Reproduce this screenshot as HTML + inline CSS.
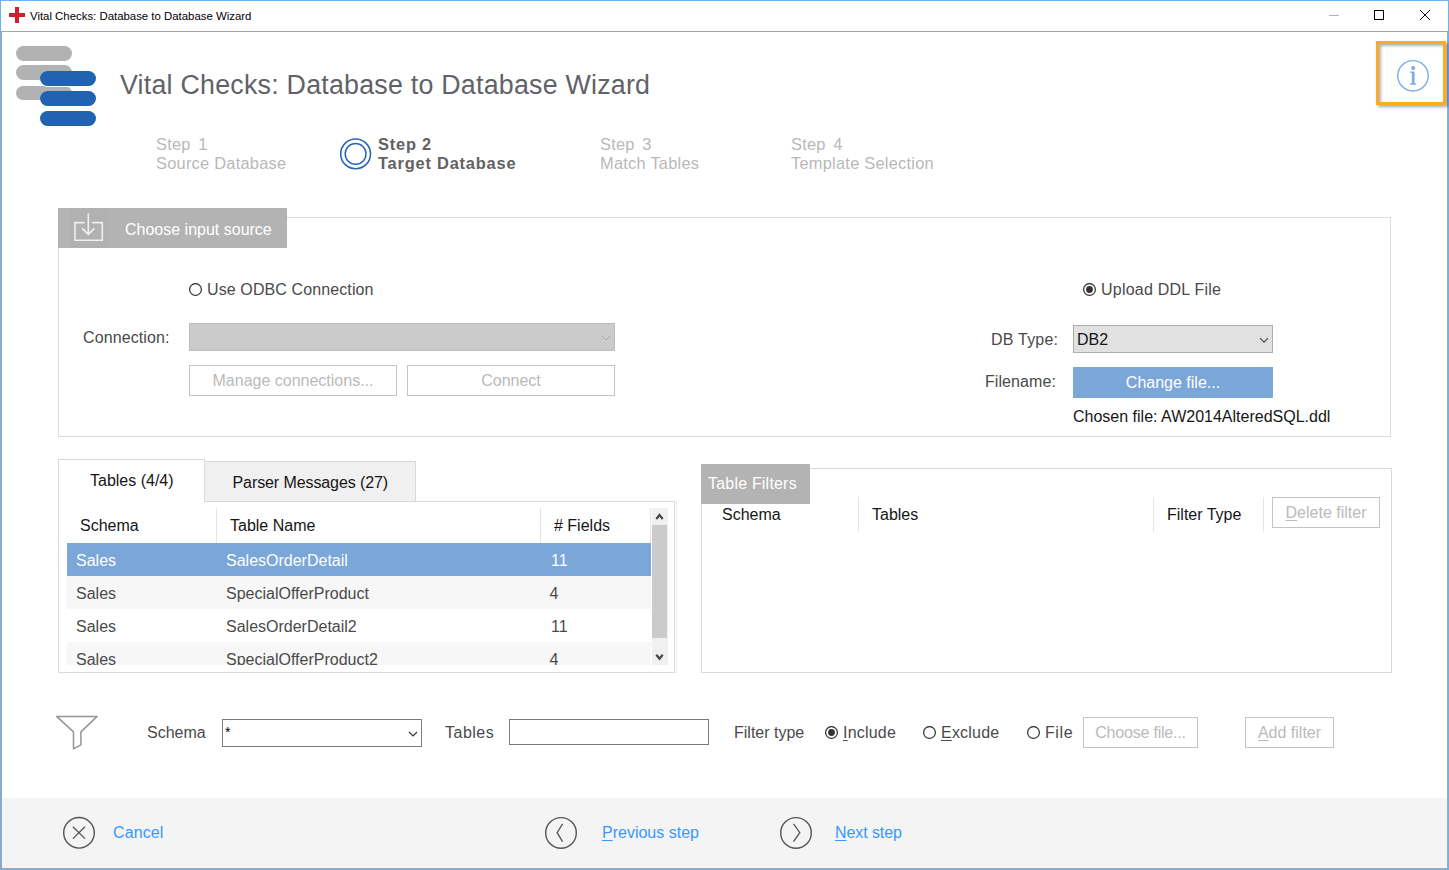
<!DOCTYPE html>
<html><head><meta charset="utf-8">
<style>
*{margin:0;padding:0;box-sizing:border-box}
html,body{width:1449px;height:870px;overflow:hidden;background:#fff;font-family:"Liberation Sans",sans-serif;font-size:16px;color:#333}
.a{position:absolute;white-space:nowrap}
#win{position:absolute;left:0;top:0;width:1449px;height:870px;border:1px solid #6cb2f0;background:#fff}
#inner{position:absolute;left:1px;top:31px;width:1447px;height:838px;border:1px solid #a8a8a8;border-top:1px solid #a5a5a5}
.t{position:absolute;white-space:nowrap;line-height:1}
u{text-underline-offset:1.5px}
</style></head><body>
<div id="win"></div>
<div id="inner"></div>
<!-- title bar -->
<div class="a" style="left:9px;top:13px;width:16px;height:4px;background:#d0202a"></div>
<div class="a" style="left:15px;top:7px;width:4px;height:16px;background:#d0202a"></div>
<div class="t" style="left:30px;top:10.7px;font-size:11.4px;color:#000">Vital Checks: Database to Database Wizard</div>
<div class="a" style="left:1329px;top:15px;width:10px;height:1px;background:#b0b0b0"></div>
<div class="a" style="left:1374px;top:10px;width:10px;height:10px;border:1px solid #000"></div>
<svg class="a" style="left:1419px;top:9px" width="12" height="12" viewBox="0 0 12 12"><path d="M1 1L11 11M11 1L1 11" stroke="#000" stroke-width="0.95"/></svg>

<!-- logo -->
<div class="a" style="left:16px;top:46px;width:56px;height:15px;border-radius:7.5px;background:#b1b2b1"></div>
<div class="a" style="left:16px;top:65.4px;width:56px;height:14.8px;border-radius:7.5px;background:#b1b2b1"></div>
<div class="a" style="left:16px;top:85.6px;width:56px;height:14.8px;border-radius:7.5px;background:#b1b2b1"></div>
<div class="a" style="left:39.5px;top:70.5px;width:57px;height:16px;border-radius:8px;background:#fff"></div>
<div class="a" style="left:39.5px;top:90.5px;width:57px;height:16px;border-radius:8px;background:#fff"></div>
<div class="a" style="left:40px;top:71px;width:56px;height:15px;border-radius:7.5px;background:#2163b0"></div>
<div class="a" style="left:40px;top:91px;width:56px;height:15px;border-radius:7.5px;background:#2163b0"></div>
<div class="a" style="left:40px;top:111px;width:56px;height:15px;border-radius:7.5px;background:#2163b0"></div>

<div class="t" style="left:120px;top:72px;font-size:26.8px;letter-spacing:0.23px;color:#5f6268">Vital Checks: Database to Database Wizard</div>

<!-- info -->
<div class="a" style="left:1376px;top:41px;width:70px;height:64px;border:3px solid #fcab26;box-shadow:2px 2px 3px rgba(0,0,0,.35), inset 2px 2px 3px rgba(0,0,0,.3)"></div>
<svg class="a" style="left:1395px;top:58px" width="36" height="36" viewBox="0 0 36 36"><circle cx="18" cy="17.85" r="15.2" fill="none" stroke="#7aaee0" stroke-width="1.4"/><circle cx="18.1" cy="10.1" r="2" fill="#7aaee0"/><path d="M15.4 13.6H19.5V25.3H21V26.8H15.2V25.3H16.9V15H15.4Z" fill="#7aaee0"/></svg>

<!-- steps -->
<div class="t" style="left:156px;top:135px;font-size:16.4px;letter-spacing:0.25px;color:#b8b8b8;line-height:19px">Step <span style="margin-left:2.7px">1</span><br>Source Database</div>
<svg class="a" style="left:338px;top:137px" width="34" height="34" viewBox="0 0 34 34"><circle cx="17.6" cy="16.9" r="14.9" fill="none" stroke="#2a66b5" stroke-width="1.6"/><circle cx="17.6" cy="16.9" r="10.4" fill="none" stroke="#2a66b5" stroke-width="1.5"/></svg>
<div class="t" style="left:378px;top:135px;font-size:16.4px;font-weight:bold;color:#626262;line-height:19px;letter-spacing:0.8px">Step 2<br>Target Database</div>
<div class="t" style="left:600px;top:135px;font-size:16.4px;letter-spacing:0.25px;color:#b8b8b8;line-height:19px">Step <span style="margin-left:2.7px">3</span><br>Match Tables</div>
<div class="t" style="left:791px;top:135px;font-size:16.4px;letter-spacing:0.25px;color:#b8b8b8;line-height:19px">Step <span style="margin-left:2.7px">4</span><br>Template Selection</div>

<!-- input source panel -->
<div class="a" style="left:58px;top:217px;width:1333px;height:220px;border:1px solid #dcdcdc"></div>
<div class="a" style="left:58px;top:208px;width:229px;height:40px;background:#b3b3b3"></div>
<div class="a" style="left:70px;top:208px;width:37px;height:40px;background:#b0b1b0"></div><svg class="a" style="left:72px;top:212px" width="34" height="32" viewBox="0 0 34 32"><path d="M12.6 10.6H3V28.3H30.3V10.6H20.1" fill="none" stroke="#f0f0f0" stroke-width="1.6"/><path d="M16.35 1.3V22.2M10.1 16.4l6.25 6 6.05-6" fill="none" stroke="#f0f0f0" stroke-width="1.6"/></svg>
<div class="t" style="left:125px;top:222px;font-size:16px;color:#fff">Choose input source</div>

<svg class="a" style="left:189px;top:283px" width="14" height="14" viewBox="0 0 14 14"><circle cx="6.5" cy="6.5" r="5.9" fill="#fff" stroke="#353535" stroke-width="1.25"/></svg>
<div class="t" style="letter-spacing:0.11px;left:207px;top:282px;font-size:16px;color:#4a4a4a">Use ODBC Connection</div>
<div class="t" style="letter-spacing:0.1px;left:83px;top:330px;font-size:16px;color:#4a4a4a">Connection:</div>
<div class="a" style="left:189px;top:323px;width:426px;height:28px;background:#cbcbcb;border:1px solid #bdbdbd"></div>
<svg class="a" style="left:601px;top:335px" width="10" height="6" viewBox="0 0 10 6"><path d="M1 1l4 4 4-4" fill="none" stroke="#a8a8a8" stroke-width="1"/></svg>
<div class="a" style="left:189px;top:365px;width:208px;height:31px;border:1px solid #c4c4c4"></div>
<div class="t" style="left:189px;top:373px;width:208px;text-align:center;font-size:16px;color:#bababa">Manage connections...</div>
<div class="a" style="left:407px;top:365px;width:208px;height:31px;border:1px solid #c4c4c4"></div>
<div class="t" style="left:407px;top:373px;width:208px;text-align:center;font-size:16px;color:#bababa">Connect</div>

<svg class="a" style="left:1083px;top:283px" width="14" height="14" viewBox="0 0 14 14"><circle cx="6.5" cy="6.5" r="5.9" fill="#fff" stroke="#353535" stroke-width="1.25"/><circle cx="6.5" cy="6.5" r="3.4" fill="#333"/></svg>
<div class="t" style="letter-spacing:0.23px;left:1101px;top:282px;font-size:16px;color:#4a4a4a">Upload DDL File</div>
<div class="t" style="letter-spacing:0.22px;left:991px;top:332px;font-size:16px;color:#4a4a4a">DB Type:</div>
<div class="a" style="left:1073px;top:325px;width:200px;height:28px;background:#e1e1e1;border:1px solid #adadad"></div>
<div class="t" style="left:1077px;top:332px;font-size:16px;color:#161616">DB2</div>
<svg class="a" style="left:1259px;top:336.5px" width="10" height="7" viewBox="0 0 10 7"><path d="M1 1.2l4 4 4-4" fill="none" stroke="#444" stroke-width="1.1"/></svg>
<div class="t" style="letter-spacing:0.08px;left:985px;top:374px;font-size:16px;color:#4a4a4a">Filename:</div>
<div class="a" style="left:1073px;top:367px;width:200px;height:31px;background:#7aa6d8"></div>
<div class="t" style="left:1073px;top:375px;width:200px;text-align:center;font-size:16px;color:#fff">Change file...</div>
<div class="t" style="left:1073px;top:409px;font-size:16px;color:#161616">Chosen file: AW2014AlteredSQL.ddl</div>

<!-- tables panel -->
<div class="a" style="left:58px;top:501px;width:617px;height:172px;border:1px solid #d9d9d9"></div>
<div class="a" style="left:676px;top:501px;width:1px;height:173px;background:#efefef"></div>
<div class="a" style="left:204px;top:461px;width:212px;height:40px;background:#f0f0f0;border:1px solid #d9d9d9;border-bottom:none"></div>
<div class="a" style="left:58px;top:459px;width:147px;height:43px;background:#fff;border:1px solid #d9d9d9;border-bottom:none"></div>
<div class="t" style="left:90px;top:473px;font-size:16px;color:#161616">Tables (4/4)</div>
<div class="t" style="letter-spacing:-0.09px;left:232.5px;top:475px;font-size:16px;color:#161616">Parser Messages (27)</div>

<div class="t" style="left:80px;top:518px;font-size:16px;color:#161616">Schema</div>
<div class="t" style="left:230px;top:518px;font-size:16px;color:#161616">Table Name</div>
<div class="t" style="left:554px;top:518px;font-size:16px;color:#161616"># Fields</div>
<div class="a" style="left:216px;top:508px;width:1px;height:35px;background:#e5e5e5"></div>
<div class="a" style="left:540px;top:508px;width:1px;height:35px;background:#e5e5e5"></div><div class="a" style="left:650px;top:508px;width:1px;height:35px;background:#e5e5e5"></div>

<div class="a" style="left:67px;top:543px;width:584px;height:33px;background:#7aa6d8"></div>
<div class="a" style="left:67px;top:576px;width:584px;height:33px;background:#f7f7f7"></div>
<div class="a" style="left:67px;top:642px;width:584px;height:23px;background:#f7f7f7;overflow:hidden"></div>
<div class="t" style="left:76px;top:553px;font-size:16px;color:#fff">Sales</div>
<div class="t" style="left:226px;top:553px;font-size:16px;color:#fff">SalesOrderDetail</div>
<div class="t" style="left:551px;top:553px;font-size:16px;color:#fff">11</div>
<div class="t" style="left:76px;top:586px;font-size:16px;color:#4a4a4a">Sales</div>
<div class="t" style="left:226px;top:586px;font-size:16px;color:#4a4a4a">SpecialOfferProduct</div>
<div class="t" style="left:549.5px;top:586px;font-size:16px;color:#4a4a4a">4</div>
<div class="t" style="left:76px;top:619px;font-size:16px;color:#4a4a4a">Sales</div>
<div class="t" style="left:226px;top:619px;font-size:16px;color:#4a4a4a">SalesOrderDetail2</div>
<div class="t" style="left:551px;top:619px;font-size:16px;color:#4a4a4a">11</div>
<div class="a" style="left:67px;top:642px;width:584px;height:23px;overflow:hidden">
<div class="t" style="left:9px;top:10px;font-size:16px;color:#4a4a4a">Sales</div>
<div class="t" style="left:159px;top:10px;font-size:16px;color:#4a4a4a">SpecialOfferProduct2</div>
<div class="t" style="left:482.5px;top:10px;font-size:16px;color:#4a4a4a">4</div>
</div>
<!-- scrollbar -->
<div class="a" style="left:652px;top:508px;width:16px;height:157px;background:#f0f0f0"></div>
<div class="a" style="left:652px;top:525px;width:15px;height:113px;background:#cbcbcb"></div>
<svg class="a" style="left:652px;top:508px" width="16" height="16" viewBox="0 0 16 16"><path d="M4.3 11L7.5 7L10.7 11" fill="none" stroke="#454545" stroke-width="2.2"/></svg>
<svg class="a" style="left:652px;top:650px" width="16" height="16" viewBox="0 0 16 16"><path d="M4.3 4.8L7.5 8.7L10.7 4.8" fill="none" stroke="#454545" stroke-width="2.2"/></svg>
<!-- table filters -->
<div class="a" style="left:701px;top:468px;width:691px;height:205px;border:1px solid #d9d9d9"></div>
<div class="a" style="left:701px;top:464px;width:109px;height:40px;background:#b3b3b3"></div>
<div class="t" style="left:708px;top:476px;font-size:16px;letter-spacing:0.2px;color:#fff">Table Filters</div>
<div class="t" style="left:722px;top:507px;font-size:16px;color:#161616">Schema</div>
<div class="t" style="left:872px;top:507px;font-size:16px;color:#161616">Tables</div>
<div class="t" style="left:1167px;top:507px;font-size:16px;color:#161616">Filter Type</div>
<div class="a" style="left:858px;top:497px;width:1px;height:35px;background:#e5e5e5"></div>
<div class="a" style="left:1153px;top:497px;width:1px;height:35px;background:#e5e5e5"></div>
<div class="a" style="left:1263px;top:497px;width:1px;height:35px;background:#e5e5e5"></div>
<div class="a" style="left:1272px;top:497px;width:108px;height:31px;border:1px solid #c4c4c4"></div>
<div class="t" style="left:1272px;top:505px;width:108px;text-align:center;font-size:16px;color:#bababa"><u>D</u>elete filter</div>

<!-- filter row -->
<svg class="a" style="left:55px;top:714px" width="44" height="38" viewBox="0 0 44 38"><path d="M1.6 2.4H42.1L25.9 17.9V30.8L18.5 34.8V17.9Z" fill="none" stroke="#959595" stroke-width="1.5" stroke-linejoin="round"/></svg>
<div class="t" style="left:147px;top:725px;font-size:16px;color:#4a4a4a">Schema</div>
<div class="a" style="left:222px;top:719px;width:200px;height:28px;border:1px solid #7a7a7a;background:#fff"></div>
<div class="t" style="left:225px;top:724.5px;font-size:14px;color:#000">*</div>
<svg class="a" style="left:408px;top:731px" width="10" height="6" viewBox="0 0 10 6"><path d="M1 1l4 4 4-4" fill="none" stroke="#333" stroke-width="1.2"/></svg>
<div class="t" style="letter-spacing:0.5px;left:445px;top:725px;font-size:16px;color:#4a4a4a">Tables</div>
<div class="a" style="left:509px;top:719px;width:200px;height:26px;border:1px solid #7a7a7a;background:#fff"></div>
<div class="t" style="left:734px;top:725px;font-size:16px;color:#4a4a4a">Filter type</div>
<svg class="a" style="left:825px;top:726px" width="14" height="14" viewBox="0 0 14 14"><circle cx="6.5" cy="6.5" r="5.9" fill="#fff" stroke="#353535" stroke-width="1.25"/><circle cx="6.5" cy="6.5" r="3.4" fill="#333"/></svg>
<div class="t" style="letter-spacing:0.2px;left:843px;top:725px;font-size:16px;color:#4a4a4a"><u>I</u>nclude</div>
<svg class="a" style="left:923px;top:726px" width="14" height="14" viewBox="0 0 14 14"><circle cx="6.5" cy="6.5" r="5.9" fill="#fff" stroke="#353535" stroke-width="1.25"/></svg>
<div class="t" style="letter-spacing:0.2px;left:941px;top:725px;font-size:16px;color:#4a4a4a"><u>E</u>xclude</div>
<svg class="a" style="left:1027px;top:726px" width="14" height="14" viewBox="0 0 14 14"><circle cx="6.5" cy="6.5" r="5.9" fill="#fff" stroke="#353535" stroke-width="1.25"/></svg>
<div class="t" style="letter-spacing:0.6px;left:1045px;top:725px;font-size:16px;color:#4a4a4a">File</div>
<div class="a" style="left:1083px;top:717px;width:115px;height:31px;border:1px solid #c4c4c4"></div>
<div class="t" style="letter-spacing:-0.2px;left:1083px;top:725px;width:115px;text-align:center;font-size:16px;color:#bababa">Choose file...</div>
<div class="a" style="left:1245px;top:717px;width:89px;height:31px;border:1px solid #c4c4c4"></div>
<div class="t" style="left:1245px;top:725px;width:89px;text-align:center;font-size:16px;color:#bababa"><u>A</u>dd filter</div>

<!-- footer -->
<div class="a" style="left:2px;top:798px;width:1445px;height:70px;background:#f4f4f4"></div>
<svg class="a" style="left:62px;top:816px" width="34" height="34" viewBox="0 0 34 34"><circle cx="17" cy="16.8" r="15.3" fill="none" stroke="#555" stroke-width="1.4"/><path d="M10.9 10.7L23 22.6M23 10.7L10.9 22.6" stroke="#555" stroke-width="1.3"/></svg>
<div class="t" style="letter-spacing:0.12px;left:113px;top:825px;font-size:16px;color:#3799fa">Cancel</div>
<svg class="a" style="left:544px;top:816px" width="34" height="34" viewBox="0 0 34 34"><circle cx="17" cy="16.9" r="15.3" fill="none" stroke="#555" stroke-width="1.4"/><path d="M18.6 7.9L13.1 16.7L18.6 25.7" fill="none" stroke="#555" stroke-width="1.3"/></svg>
<div class="t" style="left:602px;top:825px;font-size:16px;color:#3799fa"><u>P</u>revious step</div>
<svg class="a" style="left:779px;top:816px" width="34" height="34" viewBox="0 0 34 34"><circle cx="17" cy="16.9" r="15.3" fill="none" stroke="#555" stroke-width="1.4"/><path d="M14.5 7.9L20.8 16.7L14.5 25.7" fill="none" stroke="#555" stroke-width="1.3"/></svg>
<div class="t" style="letter-spacing:-0.08px;left:835px;top:825px;font-size:16px;color:#3799fa"><u>N</u>ext step</div>
</body></html>
